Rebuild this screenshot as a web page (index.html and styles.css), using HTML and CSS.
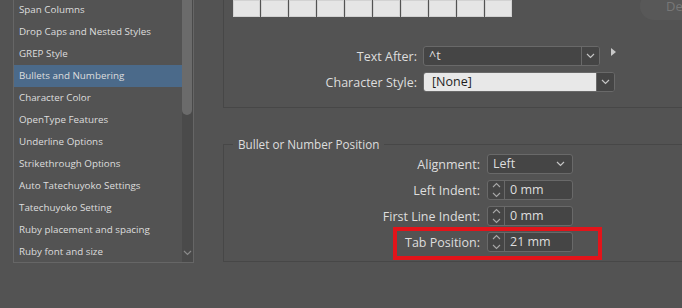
FILE: index.html
```html
<!DOCTYPE html>
<html lang="en">

<head>
    <meta charset="UTF-8">
    <meta name="viewport" content="width=device-width, initial-scale=1.0">
    <title>Paragraph Style Options</title>

    <link rel="stylesheet" href="styles.css">
</head>

<body>
    <div class="dialog">
        <div class="sidebar">
            <ul class="category-list">
                <li>Span Columns</li>
                <li>Drop Caps and Nested Styles</li>
                <li>GREP Style</li>
                <li class="selected">Bullets and Numbering</li>
                <li>Character Color</li>
                <li>OpenType Features</li>
                <li>Underline Options</li>
                <li>Strikethrough Options</li>
                <li>Auto Tatechuyoko Settings</li>
                <li>Tatechuyoko Setting</li>
                <li>Ruby placement and spacing</li>
                <li>Ruby font and size</li>
            </ul>
            <div class="scrollbar">
                <div class="thumb"></div>
                <svg class="scroll-down" width="9" height="6" viewBox="0 0 9 6">
                    <polyline points="1,1 4.5,4.5 8,1" fill="none" stroke="#8a8a8a" stroke-width="1.2" />
                </svg>
            </div>
        </div>

        <div class="main">
            <section class="panel-top">
                <div class="top-row">
                    <div class="swatches">
                        <span></span><span></span><span></span><span></span><span></span>
                        <span></span><span></span><span></span><span></span><span></span>
                    </div>
                    <button class="ghost-button">De</button>
                </div>

                <div class="field-row">
                    <label>Text After:</label>
                    <div class="select select-wide">
                        <span class="select-value">^t</span>
                        <span class="select-arrow">
                            <svg width="9" height="6" viewBox="0 0 9 6">
                                <polyline points="1,1 4.5,4.5 8,1" fill="none" stroke="#c4c4c4" stroke-width="1.2" />
                            </svg>
                        </span>
                    </div>
                    <span class="flyout"></span>
                </div>

                <div class="field-row">
                    <label>Character Style:</label>
                    <div class="select select-light">
                        <span class="select-value">[None]</span>
                        <span class="select-arrow">
                            <svg width="9" height="6" viewBox="0 0 9 6">
                                <polyline points="1,1 4.5,4.5 8,1" fill="none" stroke="#c4c4c4" stroke-width="1.2" />
                            </svg>
                        </span>
                    </div>
                </div>
            </section>

            <section class="group">
                <span class="group-title">Bullet or Number Position</span>

                <div class="group-row">
                    <label>Alignment:</label>
                    <div class="select select-small">
                        <span class="select-value">Left</span>
                        <span class="select-caret">
                            <svg width="9" height="6" viewBox="0 0 9 6">
                                <polyline points="1,1 4.5,4.5 8,1" fill="none" stroke="#c4c4c4" stroke-width="1.2" />
                            </svg>
                        </span>
                    </div>
                </div>

                <div class="group-row">
                    <label>Left Indent:</label>
                    <div class="spinner">
                        <span class="spin-arrows">
                            <svg width="9" height="16" viewBox="0 0 9 16">
                                <polyline points="1,5 4.5,1.5 8,5" fill="none" stroke="#a8a8a8" stroke-width="1.1" />
                                <polyline points="1,11 4.5,14.5 8,11" fill="none" stroke="#a8a8a8" stroke-width="1.1" />
                            </svg>
                        </span>
                        <span class="spin-value">0 mm</span>
                    </div>
                </div>

                <div class="group-row">
                    <label>First Line Indent:</label>
                    <div class="spinner">
                        <span class="spin-arrows">
                            <svg width="9" height="16" viewBox="0 0 9 16">
                                <polyline points="1,5 4.5,1.5 8,5" fill="none" stroke="#a8a8a8" stroke-width="1.1" />
                                <polyline points="1,11 4.5,14.5 8,11" fill="none" stroke="#a8a8a8" stroke-width="1.1" />
                            </svg>
                        </span>
                        <span class="spin-value">0 mm</span>
                    </div>
                </div>

                <div class="group-row">
                    <label>Tab Position:</label>
                    <div class="spinner">
                        <span class="spin-arrows">
                            <svg width="9" height="16" viewBox="0 0 9 16">
                                <polyline points="1,5 4.5,1.5 8,5" fill="none" stroke="#a8a8a8" stroke-width="1.1" />
                                <polyline points="1,11 4.5,14.5 8,11" fill="none" stroke="#a8a8a8" stroke-width="1.1" />
                            </svg>
                        </span>
                        <span class="spin-value">21 mm</span>
                    </div>
                    <span class="highlight"></span>
                </div>
            </section>
        </div>
    </div>
</body>

</html>
```

FILE: styles.css
```css
* {
    box-sizing: border-box;
}

html {
    overflow: hidden;
}

body {
    margin: 0;
    width: 682px;
    height: 308px;
    overflow: hidden;
    background-color: #535353;
    font-family: "Open Sans", "Noto Sans", sans-serif;
    color: #dedede;
}

.dialog {
    display: flex;
    align-items: flex-start;
}

/* left category list */

.sidebar {
    display: flex;
    flex-shrink: 0;
    width: 181px;
    height: 263px;
    margin-left: 13px;
    border: 1px solid #666;
    border-top: none;
}

.category-list {
    flex: 1;
    list-style: none;
    margin: -1px 0 0 0;
    padding: 0;
    font-size: 9.8px;
}

.category-list li {
    height: 22px;
    line-height: 22px;
    padding-left: 5px;
    white-space: nowrap;
}

.category-list li.selected {
    background-color: #4b6a8a;
}

.scrollbar {
    position: relative;
    width: 11px;
    background-color: #4a4a4a;
}

.thumb {
    width: 10px;
    height: 115px;
    background-color: #6b6b6b;
    border-radius: 0 0 5px 5px;
}

.scroll-down {
    position: absolute;
    left: 1px;
    bottom: 6px;
}

/* right side */

.main {
    flex-shrink: 0;
    width: 459px;
    margin-left: 29px;
    overflow: hidden;
}

.panel-top {
    height: 108px;
    border-left: 1px solid #474747;
    border-bottom: 1px solid #474747;
    padding-left: 9px;
}

.top-row {
    display: flex;
    align-items: flex-start;
    height: 17px;
    margin-bottom: 29px;
}

.swatches {
    display: flex;
    flex-shrink: 0;
}

.swatches span {
    width: 27px;
    height: 17px;
    margin-right: 1px;
    background-color: #e5e5e5;
    box-shadow: inset 0 0 0 1px #d2d2d2;
}

.ghost-button {
    flex-shrink: 0;
    margin: -8px 0 0 127px;
    width: 80px;
    height: 28px;
    padding: 0 0 0 26px;
    text-align: left;
    border: none;
    border-radius: 14px;
    background-color: #585858;
    color: #777;
    font-family: inherit;
    font-size: 13px;
}

.field-row {
    display: flex;
    align-items: center;
    height: 20px;
    margin-bottom: 6px;
    margin-left: -9px;
}

.field-row label {
    width: 193px;
    text-align: right;
    font-size: 12.5px;
    margin-right: 6px;
}

.select {
    display: flex;
    height: 20px;
    border: 1px solid #696969;
    border-radius: 3px;
    background-color: #454545;
    overflow: hidden;
}

.select-value {
    flex: 1;
    padding-left: 5px;
    line-height: 18px;
    font-size: 12.5px;
}

.select-arrow {
    display: flex;
    align-items: center;
    justify-content: center;
    width: 18px;
    border-left: 1px solid #696969;
    background-color: #454545;
}

.select-wide {
    width: 177px;
}

.select-light {
    width: 192px;
}

.select-light .select-value {
    background-color: #e8e8e8;
    color: #1e1e1e;
    padding-left: 8px;
}

.flyout {
    width: 0;
    height: 0;
    margin-left: 11px;
    margin-top: -8px;
    border-top: 4px solid transparent;
    border-bottom: 4px solid transparent;
    border-left: 5px solid #c8c8c8;
}

/* bullet position group */

.group {
    margin-top: 36px;
    height: 118px;
    border-left: 1px solid #474747;
    border-top: 1px solid #474747;
    border-bottom: 1px solid #474747;
    padding-top: 9px;
}

.group-title {
    display: block;
    width: max-content;
    margin: -19px 0 1px 9px;
    padding: 0 5px;
    background-color: #535353;
    font-size: 11.7px;
    line-height: 18px;
}

.group-row {
    position: relative;
    display: flex;
    align-items: center;
    height: 20px;
    margin-bottom: 6px;
}

.group-row label {
    width: 256px;
    text-align: right;
    margin-right: 7px;
    font-size: 12.5px;
}

.select-small {
    width: 86px;
}

.select-caret {
    display: flex;
    align-items: center;
    width: 16px;
}

.spinner {
    display: flex;
    width: 86px;
    height: 20px;
    border: 1px solid #696969;
    border-radius: 3px;
    background-color: #454545;
}

.spin-arrows {
    display: flex;
    align-items: center;
    justify-content: center;
    width: 17px;
    border-right: 1px solid #696969;
}

.spin-value {
    padding-left: 5px;
    line-height: 18px;
    font-size: 12.5px;
}

.highlight {
    position: absolute;
    left: 169px;
    top: -5px;
    width: 209px;
    height: 33px;
    border: 4px solid #e3141a;
}
```
